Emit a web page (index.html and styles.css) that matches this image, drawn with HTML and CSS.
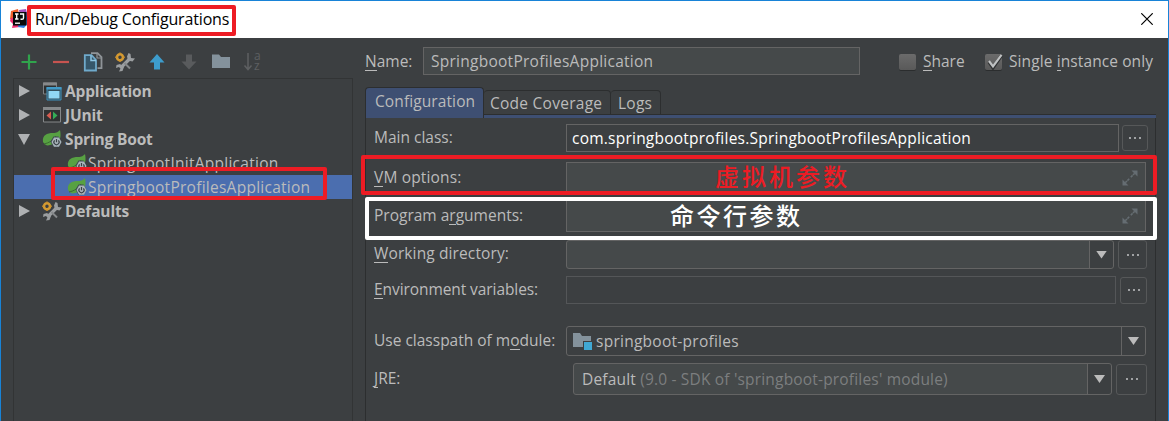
FILE: index.html
```
<!DOCTYPE html>
<html lang="en">
<head>
<meta charset="utf-8">
<title>Run/Debug Configurations</title>
<link rel="stylesheet" href="styles.css">
</head>
<body>
<svg class="defs" width="0" height="0">
  <defs>
    <symbol id="spring" viewBox="0 0 20 20">
      <path d="M1 13C0 6 5 4 11 4C15 4 16 3 18 1C19 6 19 11 15 14L8 16C5 17 3 16 1 13Z" fill="#57a142"/>
      <path d="M2 15C7 14 12 11 14 7" fill="none" stroke="#3c6b32" stroke-width="1"/>
      <path d="M11.500 7.500h5l3 5l-3 5.500h-5l-3-5.500z" fill="#3c4a50"/>
      <path d="M12 8.500h5l2.500 4.500l-2.500 4.800h-5l-2.500-4.800z" fill="#a9b4bb"/>
      <path d="M12.600 11.300a2.600 2.600 0 1 0 3.800 0M14.500 10v3.200" fill="none" stroke="#3a4247" stroke-width="1.200"/>
    </symbol>
    <symbol id="tools" viewBox="0 0 20 20">
      <path d="M5.500 16L15 6.500" stroke="#9b9ea0" stroke-width="3.200"/>
      <path d="M13.500 1L12 4.500L13 8.500L17.500 9.500L20 6.500L16 6L15.500 2Z" fill="#9b9ea0"/>
      <path d="M1.500 13L5 12L9 15L7.500 19L4 19.500L5.500 16.500L4 15L1 16Z" fill="#9b9ea0"/>
      <path d="M9.500 11L15 16.500" stroke="#85888a" stroke-width="2"/>
      <circle cx="5" cy="5.200" r="3" fill="none" stroke="#d49a32" stroke-width="2.600"/>
      <path d="M5 .4v1.500M5 8.500v1.500M.2 5.200h1.500M8.300 5.200h1.500" stroke="#c98d2b" stroke-width="1.500"/>
    </symbol>
    <symbol id="expand" viewBox="0 0 16 16">
      <path d="M8.800 7.200L13 3M7.200 8.800L3 13" stroke="#656d72" stroke-width="1.600" stroke-dasharray="2.500 .6"/>
      <path d="M9.500 .5H15.500V6.500ZM.5 9.500V15.500H6.500Z" fill="#656d72"/>
    </symbol>
  </defs>
</svg>
<div class="window">
  <header class="titlebar">
    <svg class="logo" width="20" height="20" viewBox="0 0 20 20">
      <path d="M1 2L8 0L10 10L4 13L0 10Z" fill="#f0612d"/>
      <path d="M9 1L16 0L18 8L10 6Z" fill="#a451bd"/>
      <path d="M1 9L9 8L10 18L2 19L3 15L0 12Z" fill="#ef2d72"/>
      <path d="M10 10L19 6V13L14 19L8 18Z" fill="#2c7fe4"/>
      <rect x="3" y="3" width="13.500" height="13.500" fill="#090909"/>
      <path d="M5 5h3.500M6.700 5v5M5 10h3.500M10 5h3.500v4q0 1.200-1.500 1.200h-1.500" fill="none" stroke="#fff" stroke-width="1.400"/>
      <path d="M5 14.200h5" stroke="#fff" stroke-width="1.300"/>
    </svg>
    <span class="title">Run/Debug Configurations</span>
    <svg class="close" width="12" height="12" viewBox="0 0 12 12"><path d="M.3 .3L11.700 11.700M11.700 .3L.3 11.700" stroke="#000" stroke-width="1.200"/></svg>
  </header>
  <main class="body">
    <section class="side">
      <div class="toolbar">
        <svg width="20" height="20" viewBox="0 0 20 20"><path d="M10 2.500v15M2.500 10h15" stroke="#30a44c" stroke-width="2.200"/></svg>
        <svg width="20" height="20" viewBox="0 0 20 20"><path d="M2 10h16" stroke="#c75450" stroke-width="2.200"/></svg>
        <svg width="20" height="20" viewBox="0 0 20 20">
          <path d="M8 1.200h6.500l4 4v11h-4" fill="none" stroke="#8f9498" stroke-width="1.800"/><path d="M14 1v5h5" fill="none" stroke="#8f9498" stroke-width="1.200"/>
          <path d="M1.800 3.200h6.700l4.500 4.800v10.500H1.800z" fill="#36576a" stroke="#6faacb" stroke-width="1.800"/><path d="M8 3.500v5h5" fill="none" stroke="#8fc6e3" stroke-width="1.500"/>
        </svg>
        <svg width="20" height="20"><use href="#tools"/></svg>
        <svg width="20" height="20" viewBox="0 0 20 20"><path d="M10 2L17.500 10.500H13V17.500H7V10.500H2.500Z" fill="#3d9ccc"/></svg>
        <svg width="20" height="20" viewBox="0 0 20 20"><path d="M10 17.500L17.500 9.500H13V2.500H7V9.500H2.500Z" fill="#595b5d"/></svg>
        <svg width="20" height="20" viewBox="0 0 20 20"><path d="M1 2.500H8L10 5H19V16H1Z" fill="#84929c"/></svg>
        <div class="sort"><svg width="10" height="20" viewBox="0 0 10 20"><path d="M5 1v16M1.500 13.500L5 17.500L8.500 13.500" fill="none" stroke="#5e6062" stroke-width="1.500"/></svg><div class="az"><div>a</div><div>z</div></div></div>
      </div>
      <div class="tree">
        <div class="node group"><i class="arrow"></i>
          <svg width="20" height="20" viewBox="0 0 20 20"><path d="M1.500 2h13v11h-13z" fill="#2e3031" stroke="#7d8083"/><path d="M1 1.500h14v3H1z" fill="#87898b"/><path d="M5 6.500h14v12.500H5z" fill="#34505e" stroke="#3f92bd"/><path d="M4.500 6h15v2.500h-15z" fill="#429bc8"/><path d="M6.500 10h11v7.500h-11z" fill="#91d7f5"/></svg>
          <span>Application</span></div>
        <div class="node group"><i class="arrow"></i>
          <svg width="20" height="20" viewBox="0 0 20 20"><path d="M1.500 3h17v14h-17z" fill="#303233" stroke="#85888a"/><path d="M1 2h18v3H1z" fill="#85888a"/><path d="M9 6.500v8L4.500 10.500z" fill="#d65c50"/><path d="M11 6.500v8l4.500-4z" fill="#34ac56"/></svg>
          <span>JUnit</span></div>
        <div class="node group"><i class="arrow open"></i><svg width="20" height="20"><use href="#spring"/></svg><span>Spring Boot</span></div>
        <div class="node leaf"><svg width="20" height="20"><use href="#spring"/></svg><span class="wide">SpringbootInitApplication</span></div>
        <div class="node leaf selected"><svg width="20" height="20"><use href="#spring"/></svg><span class="wide">SpringbootProfilesApplication</span></div>
        <div class="node group"><i class="arrow"></i><svg width="20" height="20"><use href="#tools"/></svg><span>Defaults</span></div>
      </div>
    </section>
    <section class="editor">
      <div class="namebar">
        <label class="w-name"><u>N</u>ame:</label>
        <div class="field name"><span class="wide">SpringbootProfilesApplication</span></div>
        <i class="check"></i><label class="share"><u>S</u>hare</label>
        <i class="check"><svg width="18" height="18" viewBox="0 0 18 18"><path d="M4 8L8 14L16.500 1.500" fill="none" stroke="#303233" stroke-width="3.200"/><path d="M4 7L8 12.500L16.500 .8" fill="none" stroke="#bfc1c2" stroke-width="2.200"/></svg></i><label class="single">Single <u>i</u>nstance only</label>
      </div>
      <nav class="tabs">
        <div class="tab active">Configuration</div>
        <div class="tab coverage wide">Code Coverage</div>
        <div class="tab logs wide">Logs</div>
      </nav>
      <div class="panel">
        <div class="row main-class"><label>Main class:</label><div class="field plain"><span>com.springbootprofiles.SpringbootProfilesApplication</span></div><button class="more"></button></div>
        <div class="row vm"><label><u>V</u>M options:</label><div class="field"><svg class="expand" width="16" height="16"><use href="#expand"/></svg></div></div>
        <div class="row args"><label>Program a<u>r</u>guments:</label><div class="field"><svg class="expand" width="16" height="16"><use href="#expand"/></svg></div></div>
        <div class="row dir"><label><u>W</u>orking directory:</label><div class="field combo"><b class="drop"></b></div><button class="more"></button></div>
        <div class="row env"><label><u>E</u>nvironment variables:</label><div class="field plain dim"></div><button class="more"></button></div>
        <div class="row module"><label>Use classpath of m<u>o</u>dule:</label><div class="field plain combo">
          <svg width="20" height="20" viewBox="0 0 20 20"><path d="M1 2H8L10 5H19V10H11V16H1Z" fill="#84929c"/><path d="M12 11h8v8h-8z" fill="#40a8d4"/></svg>
          <span class="wide">springboot-profiles</span><b class="drop"></b></div></div>
        <div class="row jre"><label><u>J</u>RE:</label><div class="field combo"><span>Default <em>(9.0 - SDK of 'springboot-profiles' module)</em></span><b class="drop"></b></div><button class="more"></button></div>
      </div>
    </section>
  </main>
  <div class="mark mark-title"></div>
  <div class="mark mark-tree"></div>
  <div class="mark mark-vm"></div>
  <div class="mark mark-args"></div>
  <div class="note note-vm">虚拟机参数</div>
  <div class="note note-args">命令行参数</div>
</div>
</body>
</html>
```
FILE: styles.css
```
* { box-sizing: border-box; }
body { margin: 0; background: #3c3f41; font: 15.5px/24px "Open Sans", "Noto Sans", sans-serif; color: #bbbbbb; overflow: hidden; }
.defs { position: absolute; }
.window { position: relative; width: 1169px; height: 421px; border: 1px solid #1883d7; border-bottom: 0; display: flex; flex-direction: column; }
svg { display: block; flex: none; }
span, label, .tab { white-space: nowrap; }
u { text-decoration: none; box-shadow: inset 0 -1px #bbbbbb; display: inline-block; line-height: 20px; }
.wide { letter-spacing: .26px; }

.titlebar { height: 37px; background: #fff; color: #000; display: flex; align-items: center; padding: 0 15px 2px 9px; font-size: 16px; }
.title { margin-left: 5px; flex: 1; letter-spacing: -.16px; }

.body { flex: 1; display: flex; background: #3c3f41; min-height: 0; }
.side { width: 352px; padding-left: 12px; display: flex; flex-direction: column; }
.toolbar { height: 40px; display: flex; gap: 12px; padding: 14px 0 0 6px; }
.sort { display: flex; width: 20px; height: 20px; font-size: 12px; line-height: 10px; color: #5e6062; }
.az { margin: -1px 0 0 1px; }
.tree { flex: 1; border: 1px solid #323435; border-bottom: 0; }
.node { height: 24px; display: flex; align-items: center; }
.group { font-weight: 700; letter-spacing: -.16px; padding-left: 4px; }
.leaf { padding-left: 53px; }
.leaf span { margin-left: 1px; }
.group svg { margin-left: 12px; }
.group span { margin-left: 3px; }
.selected { background: #4b6eaf; }
.arrow { width: 12px; height: 12px; background: #afb1b3; clip-path: polygon(1px 0, 100% 50%, 1px 100%); }
.open { clip-path: polygon(0 1px, 100% 1px, 50% 100%); }

.editor { width: 803px; padding-left: 12px; display: flex; flex-direction: column; }
.namebar { height: 49px; padding-top: 9px; display: flex; align-items: flex-start; line-height: 28px; }
.w-name { width: 58px; }
.field { height: 28px; border: 1px solid #646464; background: #45494a; display: flex; align-items: center; position: relative; }
.plain { background: #3c3f41; }
.dim { border-color: #545658; }
.name { width: 437px; padding-left: 7px; margin-right: 39px; }
.check { width: 17px; height: 16px; margin-top: 7px; border-radius: 2px; background: linear-gradient(#6b6b6b, #595959); box-shadow: 0 1px #2b2d2e; }
.share { margin-left: 7px; width: 62px; }
.single { margin-left: 7px; letter-spacing: .1px; }

.tabs { height: 31px; display: flex; align-items: flex-start; border-bottom: 3px solid #3e4f72; }
.tab { height: 25px; margin-top: 3px; border: 1px solid #2c2e2f; border-left-width: 0; border-radius: 4px 4px 0 0; line-height: 24px; padding-left: 6px; }
.active { width: 119px; height: 31px; margin: 0; background: #3e4f72; border-bottom: 0; border-left-width: 1px; line-height: 27px; padding-left: 9px; letter-spacing: .1px; }
.coverage { width: 127px; }
.logs { width: 50px; padding-left: 7px; }
.tabs::after { content: ""; flex: 1; align-self: flex-start; margin-top: 27px; height: 1px; background: #2c2e2f; }

.panel { width: 791px; flex: 1; border: solid #2c2e2f; border-width: 0 1px; padding: 6px 7px 0 8px; }
.row { display: flex; align-items: center; }
.row label { width: 192px; flex: none; padding-bottom: 2px; }
.row .field { flex: none; }
.more { width: 27px; height: 27px; border: 1px solid #565859; border-radius: 3px; padding: 0; background: linear-gradient(90deg, #a0a2a4 2px, transparent 2px, transparent 5px, #a0a2a4 5px, #a0a2a4 7px, transparent 7px, transparent 10px, #a0a2a4 10px) center / 12px 2px no-repeat; }
.expand { margin-left: auto; margin-right: 7px; }
.combo { border-radius: 3px; }
.drop { margin-left: auto; width: 24px; height: 100%; border-left: 1px solid #646464; background: #3c3f41; border-radius: 0 3px 3px 0; display: flex; align-items: center; justify-content: center; }
.drop::before { content: ""; width: 11px; height: 8px; background: #bbbbbb; clip-path: polygon(0 0, 100% 0, 50% 100%); }
em { font-style: normal; color: #7c7e7f; }

.main-class { height: 28px; }
.main-class .field { width: 553px; margin-right: 3px; padding-left: 5px; color: #fff; letter-spacing: .23px; }
.main-class .more { width: 26px; height: 26px; }
.vm { margin-top: 10px; height: 31px; letter-spacing: .15px; }
.vm .field { width: 580px; height: 31px; }
.args { margin-top: 7px; height: 32px; }
.args .field { width: 580px; height: 32px; }
.dir { margin-top: 8px; height: 29px; letter-spacing: .12px; }
.dir label { padding-bottom: 4px; }
.dir .field { width: 548px; height: 29px; margin-right: 4px; }
.dir .more { width: 29px; height: 29px; }
.env { margin-top: 7px; height: 28px; letter-spacing: -.08px; }
.env .field { width: 550px; margin-right: 4px; }
.module { margin-top: 22px; height: 30px; }
.module .field { width: 580px; height: 30px; padding-left: 5px; }
.module span { margin: 0 0 1px 4px; }
.jre { margin-top: 7px; height: 32px; }
.jre .field { width: 539px; height: 32px; margin-left: 7px; margin-right: 4px; padding-left: 8px; letter-spacing: .18px; }
.jre .more { width: 31px; height: 31px; }

/* Annotations drawn over the dialog */
.mark { position: absolute; border: 4px solid #ed1c24; border-radius: 2px; }
.mark-title { left: 26px; top: 4px; width: 209px; height: 31px; }
.mark-tree { left: 50px; top: 166px; width: 276px; height: 33px; }
.mark-vm { left: 360px; top: 154px; width: 796px; height: 40px; }
.mark-args { left: 364px; top: 196px; width: 792px; height: 43px; border-color: #fff; }
.note { position: absolute; font: 500 24px/28px "Noto Sans CJK SC", sans-serif; letter-spacing: 3px; white-space: nowrap; }
.note-vm { left: 714px; top: 161px; color: #ed1c24; }
.note-args { left: 669px; top: 200px; color: #fff; letter-spacing: 2.500px; }
```
